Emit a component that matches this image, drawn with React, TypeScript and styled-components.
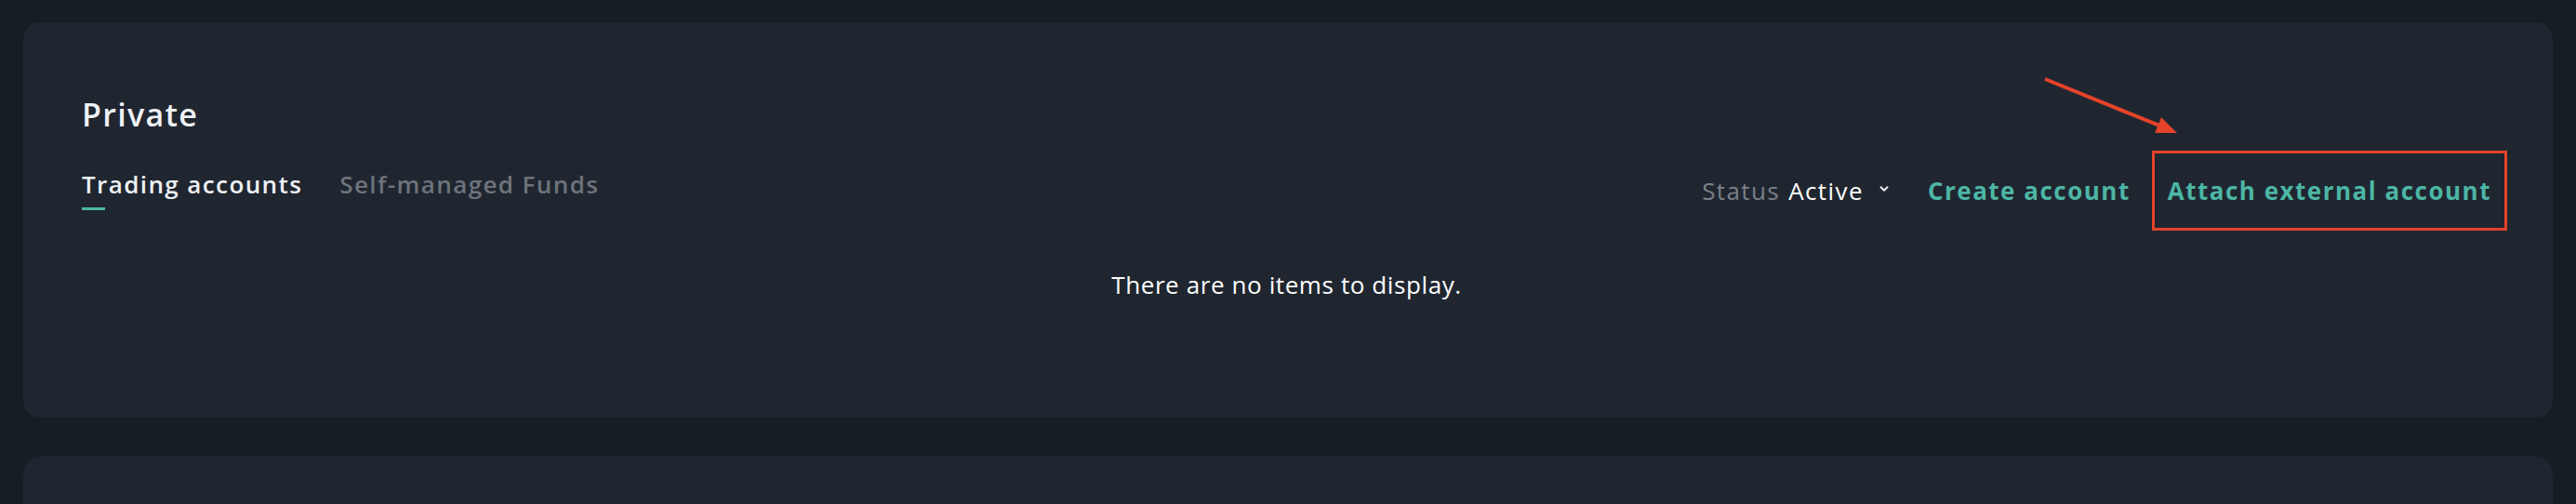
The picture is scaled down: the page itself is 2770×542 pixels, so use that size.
import styled, { createGlobalStyle } from "styled-components";
import { ChevronDown } from "lucide-react";

const GlobalStyle = createGlobalStyle`
	html, body {
		margin: 0;
		padding: 0;
		background-color: #171d25;
	}
	body {
		font-family: "Open Sans", "Noto Sans", sans-serif;
		color: #f1f3f6;
	}
`;

function AnnotationArrow() {
	return (
		<ArrowSvg width="160" height="80" viewBox="0 0 160 80">
			<line x1="9" y1="10" x2="131" y2="59.7" stroke="#e5432a" strokeWidth="4" />
			<polygon points="151,68 127.2,68.1 134,51.3" fill="#e5432a" />
		</ArrowSvg>
	);
}

function App() {
	return (
		<>
			<GlobalStyle />
			<Page>
				<Card>
					<Title>Private</Title>
					<Header>
						<Tabs>
							<Tab $active>Trading accounts</Tab>
							<Tab>Self-managed Funds</Tab>
						</Tabs>
						<Actions>
							<StatusFilter>
								<span className="label">Status</span>
								<span className="value">Active</span>
								<ChevronDown size={14} strokeWidth={3.5} />
							</StatusFilter>
							<LinkButton>Create account</LinkButton>
							<LinkButton $highlighted>Attach external account</LinkButton>
						</Actions>
					</Header>
					<Empty>There are no items to display.</Empty>
					<AnnotationArrow />
				</Card>
				<Card $short />
			</Page>
		</>
	);
}

const Page = styled.div`
	display: flex;
	flex-direction: column;
	gap: 42px;
	padding: 24px 25px 0;
	height: 542px;
	box-sizing: border-box;
	overflow: hidden;
`;

const Card = styled.section<{ $short?: boolean }>`
	position: relative;
	flex-shrink: 0;
	background-color: #1f2630;
	border-radius: 18px;
	padding: ${(p) => (p.$short ? "0" : "79px 66px 127px 63px")};
	height: ${(p) => (p.$short ? "200px" : "auto")};
`;

const Title = styled.h1`
	margin: 0;
	font-size: 34px;
	line-height: 40px;
	font-weight: 600;
	letter-spacing: 1.3px;
	color: #eef1f5;
`;

const Header = styled.div`
	display: flex;
	justify-content: space-between;
	align-items: center;
	height: 84px;
	margin-top: 19px;
`;

const Tabs = styled.div`
	display: flex;
	gap: 40px;
	align-items: flex-start;
`;

const Tab = styled.div<{ $active?: boolean }>`
	font-size: 26px;
	line-height: 32px;
	font-weight: 600;
	letter-spacing: 1.4px;
	color: ${(p) => (p.$active ? "#eef1f5" : "#6e737b")};
	padding-bottom: 12px;
	position: relative;
	&::after {
		content: "";
		display: ${(p) => (p.$active ? "block" : "none")};
		position: absolute;
		left: 0;
		bottom: 0;
		width: 25px;
		height: 3px;
		background-color: #4db6a5;
	}
`;

const Actions = styled.div`
	display: flex;
	align-items: center;
	gap: 40px;
	padding-top: 2px;
`;

const StatusFilter = styled.div`
	display: flex;
	align-items: center;
	gap: 9px;
	font-size: 26px;
	line-height: 32px;
	font-weight: 500;
	letter-spacing: 1.4px;
	.label {
		color: #7b8089;
	}
	.value {
		color: #ffffff;
	}
	svg {
		color: #e6e8eb;
		margin-left: 6px;
		margin-top: -4px;
	}
`;

const LinkButton = styled.button<{ $highlighted?: boolean }>`
	position: relative;
	background: transparent;
	border: none;
	padding: 0;
	font-family: inherit;
	font-size: 26px;
	line-height: 32px;
	font-weight: 700;
	letter-spacing: 1.5px;
	color: #4db6a5;
	cursor: pointer;
	&::after {
		content: "";
		display: ${(p) => (p.$highlighted ? "block" : "none")};
		position: absolute;
		inset: -27px -17px;
		border: 3px solid #e5432a;
	}
`;

const Empty = styled.p`
	margin: 44px 0 0;
	text-align: center;
	font-size: 26px;
	line-height: 32px;
	font-weight: 400;
	letter-spacing: 0.6px;
	color: #ffffff;
`;

const ArrowSvg = styled.svg`
	position: absolute;
	left: 2165px;
	top: 51px;
`;

export default App;
